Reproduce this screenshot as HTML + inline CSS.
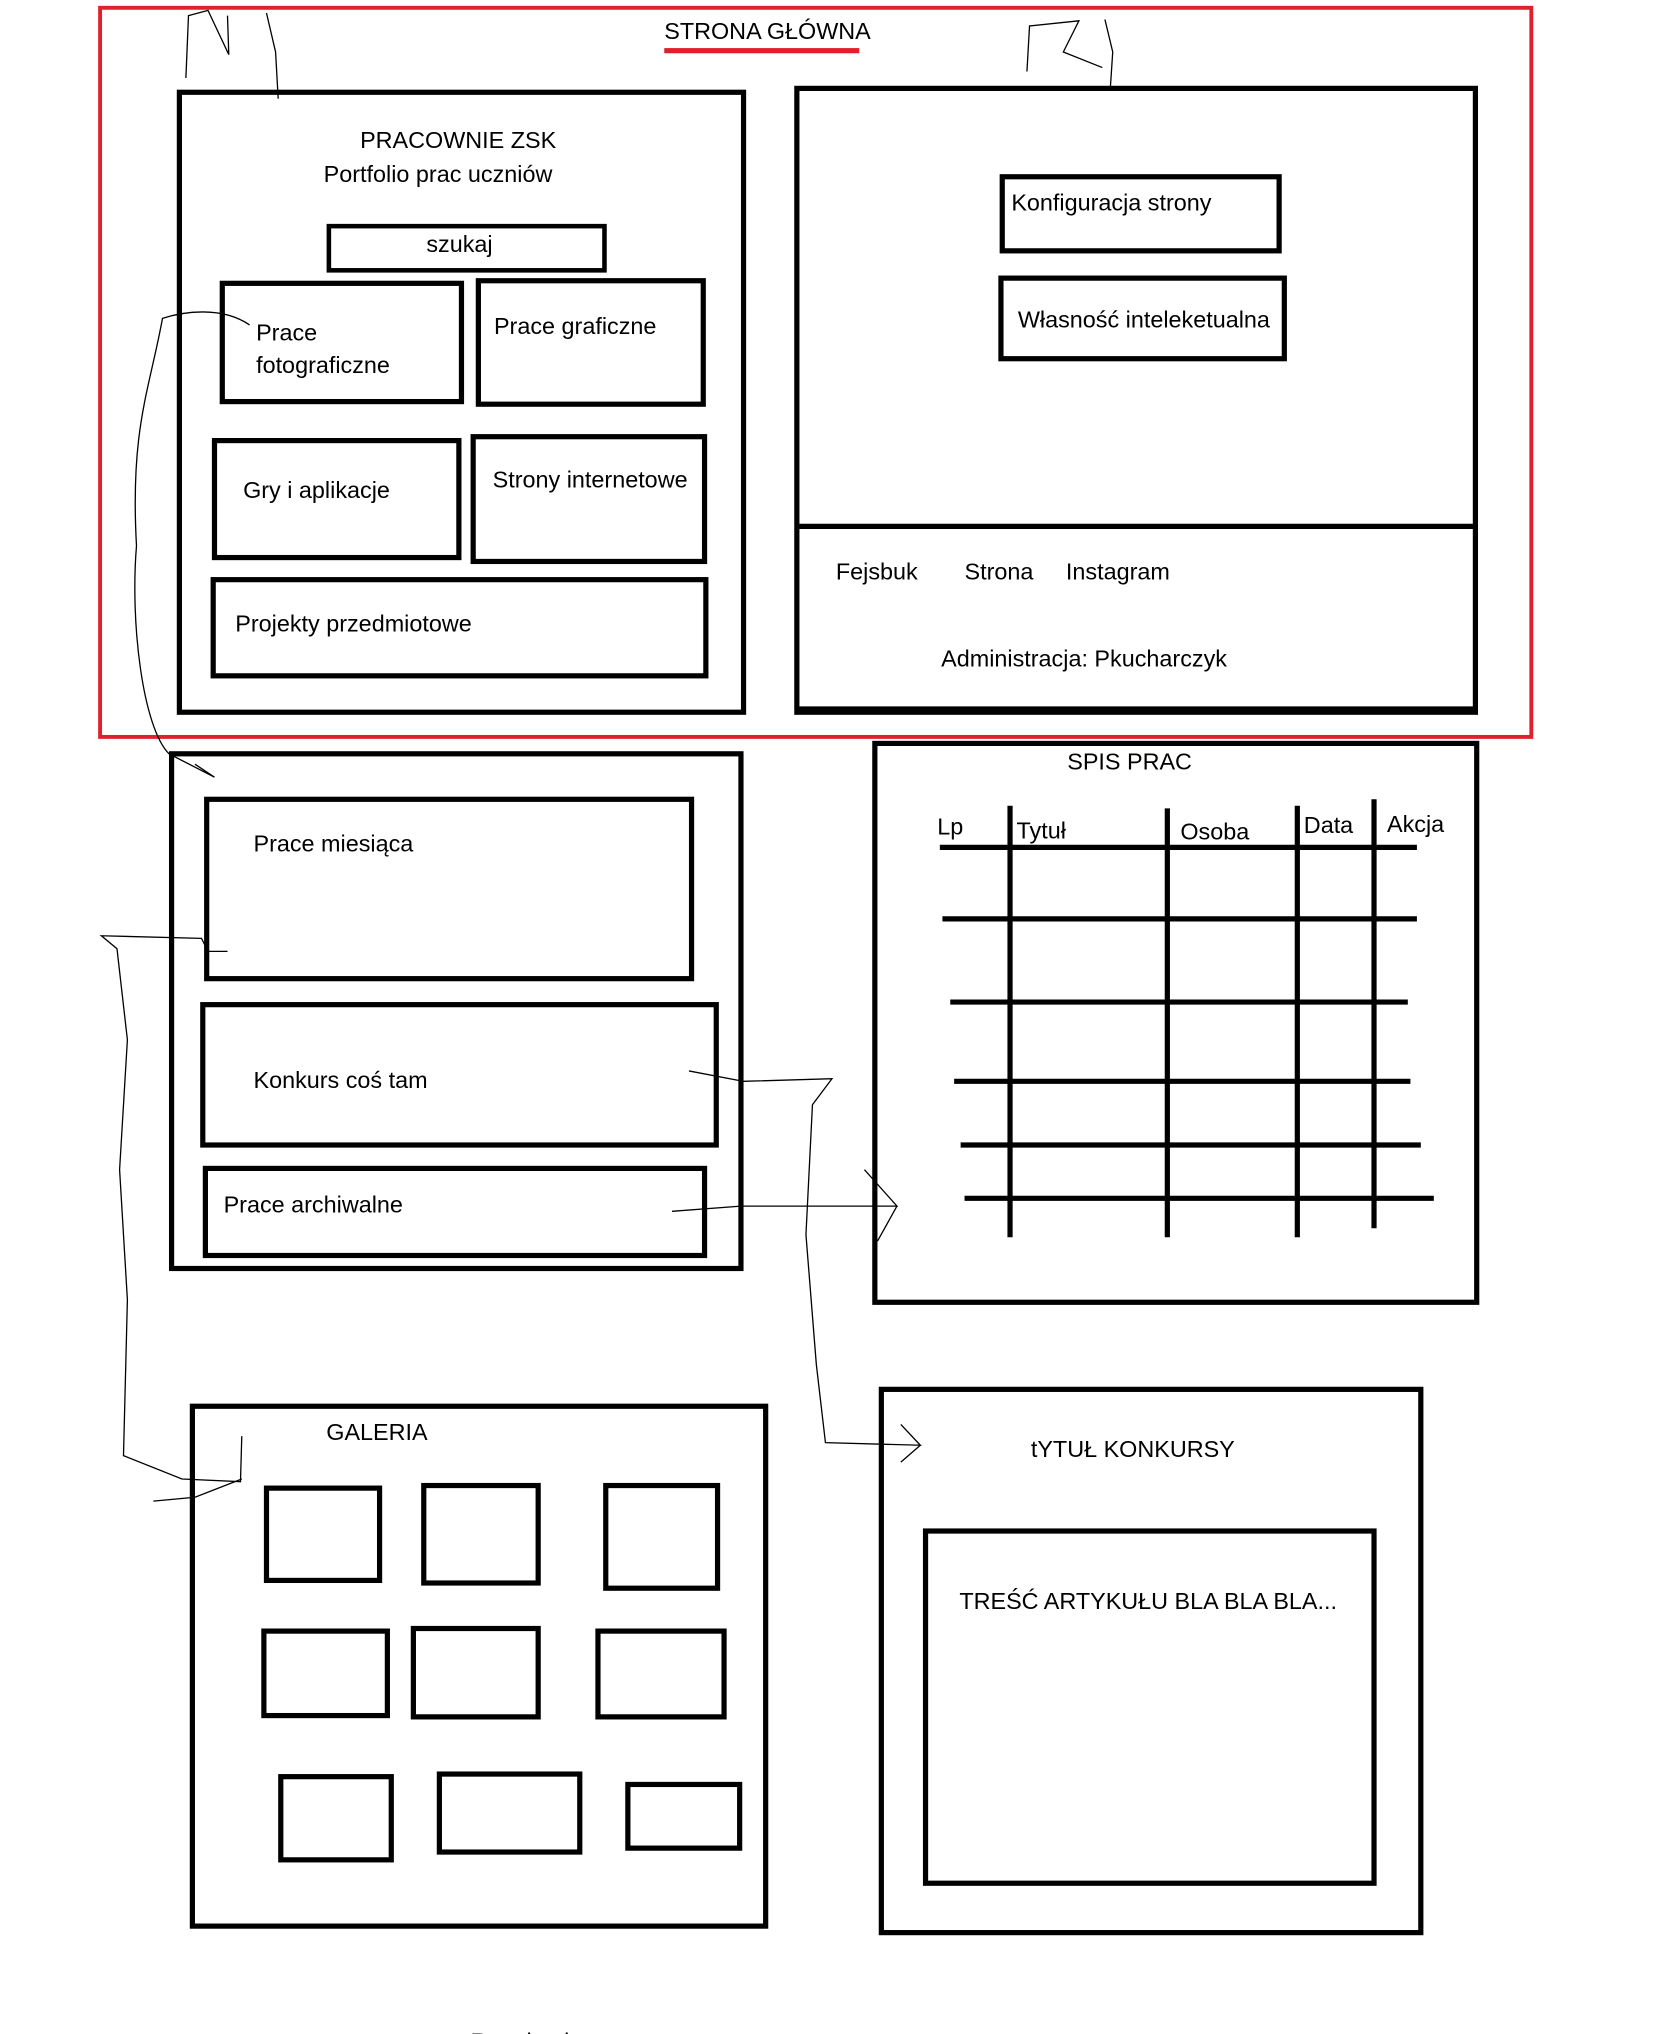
<!DOCTYPE html>
<html><head><meta charset="utf-8"><style>
html,body{margin:0;padding:0;background:#fff;width:1660px;height:2034px;overflow:hidden}
svg{display:block}
text{font-family:"Liberation Sans","DejaVu Sans",sans-serif;font-size:18px;fill:#000}
</style></head><body>
<svg width="1660" height="2034" viewBox="0 0 1277 1565" preserveAspectRatio="none" xmlns="http://www.w3.org/2000/svg">
<g fill="none" stroke="#000" stroke-width="4">
<rect x="77" y="6" width="1101" height="561" stroke="#e0202a" stroke-width="3"/>
<rect x="138" y="71" width="434" height="477"/>
<rect x="253" y="174" width="212" height="34" stroke-width="3.5"/>
<rect x="171" y="218" width="184" height="91"/>
<rect x="368" y="216" width="173" height="95"/>
<rect x="165" y="339" width="188" height="90"/>
<rect x="364" y="336" width="178" height="96"/>
<rect x="164" y="446" width="379" height="74"/>
<rect x="613" y="68" width="522" height="480"/>
<line x1="613" y1="405" x2="1135" y2="405"/>
<line x1="613" y1="546" x2="1135" y2="546" stroke-width="5"/>
<rect x="771" y="136" width="213" height="57"/>
<rect x="770" y="214" width="218" height="62"/>
<rect x="132" y="580" width="438" height="396"/>
<rect x="159" y="615" width="373" height="138"/>
<rect x="156" y="773" width="395" height="108"/>
<rect x="158" y="899" width="384" height="67"/>
<rect x="673" y="572" width="463" height="430"/>
<line x1="723" y1="652" x2="1090" y2="652"/>
<line x1="725" y1="707" x2="1090" y2="707"/>
<line x1="731" y1="771" x2="1083" y2="771"/>
<line x1="734" y1="832" x2="1085" y2="832"/>
<line x1="739" y1="881" x2="1093" y2="881"/>
<line x1="742" y1="922" x2="1103" y2="922"/>
<line x1="777" y1="620" x2="777" y2="952"/>
<line x1="898" y1="622" x2="898" y2="952"/>
<line x1="998" y1="620" x2="998" y2="952"/>
<line x1="1057" y1="615" x2="1057" y2="945"/>
<rect x="148" y="1082" width="441" height="400"/>
<rect x="205" y="1145" width="87" height="71"/>
<rect x="326" y="1143" width="88" height="75"/>
<rect x="466" y="1143" width="86" height="79"/>
<rect x="203" y="1255" width="95" height="65"/>
<rect x="318" y="1253" width="96" height="68"/>
<rect x="460" y="1255" width="97" height="66"/>
<rect x="216" y="1367" width="85" height="64"/>
<rect x="338" y="1365" width="108" height="60"/>
<rect x="483" y="1373" width="86" height="49"/>
<rect x="678" y="1069" width="415" height="418"/>
<rect x="712" y="1178" width="345" height="271"/>
</g>
<g fill="none" stroke="#000" stroke-width="1">
<path d="M143 60 L145 12 L160 8 L176 42 L175 12 M205 10 L212 40 L214 76"/>
<path d="M790 55 L792 20 L830 16 L818 40 L848 52 M850 15 L856 40 L854 70"/>
<path d="M192 250 C170 235 140 240 125 245 C115 300 100 330 105 420 C100 480 110 560 130 580 L165 598 L150 588"/>
<path d="M175 732 L160 732 L155 722 L78 720 L90 730 L98 800 L92 900 L98 1000 L95 1120 L140 1138 L185 1140 L186 1105 M118 1155 L150 1152 L186 1138"/>
<path d="M530 824 L572 832 L640 830 L625 850 L620 950 L628 1050 L635 1110 L708 1112 L693 1096 M708 1112 L693 1125"/>
<path d="M517 932 L570 928 L690 928 L665 900 M690 928 L675 955"/>
</g>
<rect x="511" y="37" width="150" height="4" fill="#e0202a"/>
<text x="511" y="30">STRONA GŁÓWNA</text>
<text x="277" y="114">PRACOWNIE ZSK</text>
<text x="249" y="140">Portfolio prac uczniów</text>
<text x="328" y="194">szukaj</text>
<text x="197" y="262">Prace</text>
<text x="197" y="287">fotograficzne</text>
<text x="380" y="257">Prace graficzne</text>
<text x="187" y="383">Gry i aplikacje</text>
<text x="379" y="375">Strony internetowe</text>
<text x="181" y="486">Projekty przedmiotowe</text>
<text x="778" y="162">Konfiguracja strony</text>
<text x="783" y="252">Własność inteleketualna</text>
<text x="643" y="446">Fejsbuk</text>
<text x="742" y="446">Strona</text>
<text x="820" y="446">Instagram</text>
<text x="724" y="513">Administracja: Pkucharczyk</text>
<text x="195" y="655">Prace miesiąca</text>
<text x="195" y="837">Konkurs coś tam</text>
<text x="172" y="933">Prace archiwalne</text>
<text x="821" y="592">SPIS PRAC</text>
<text x="721" y="642">Lp</text>
<text x="782" y="645">Tytuł</text>
<text x="908" y="646">Osoba</text>
<text x="1003" y="641">Data</text>
<text x="1067" y="640">Akcja</text>
<text x="251" y="1108">GALERIA</text>
<text x="793" y="1121">tYTUŁ KONKURSY</text>
<text x="738" y="1238">TREŚĆ ARTYKUŁU BLA BLA BLA...</text>
<text x="362" y="1577">Regulamin</text>
</svg>
</body></html>
